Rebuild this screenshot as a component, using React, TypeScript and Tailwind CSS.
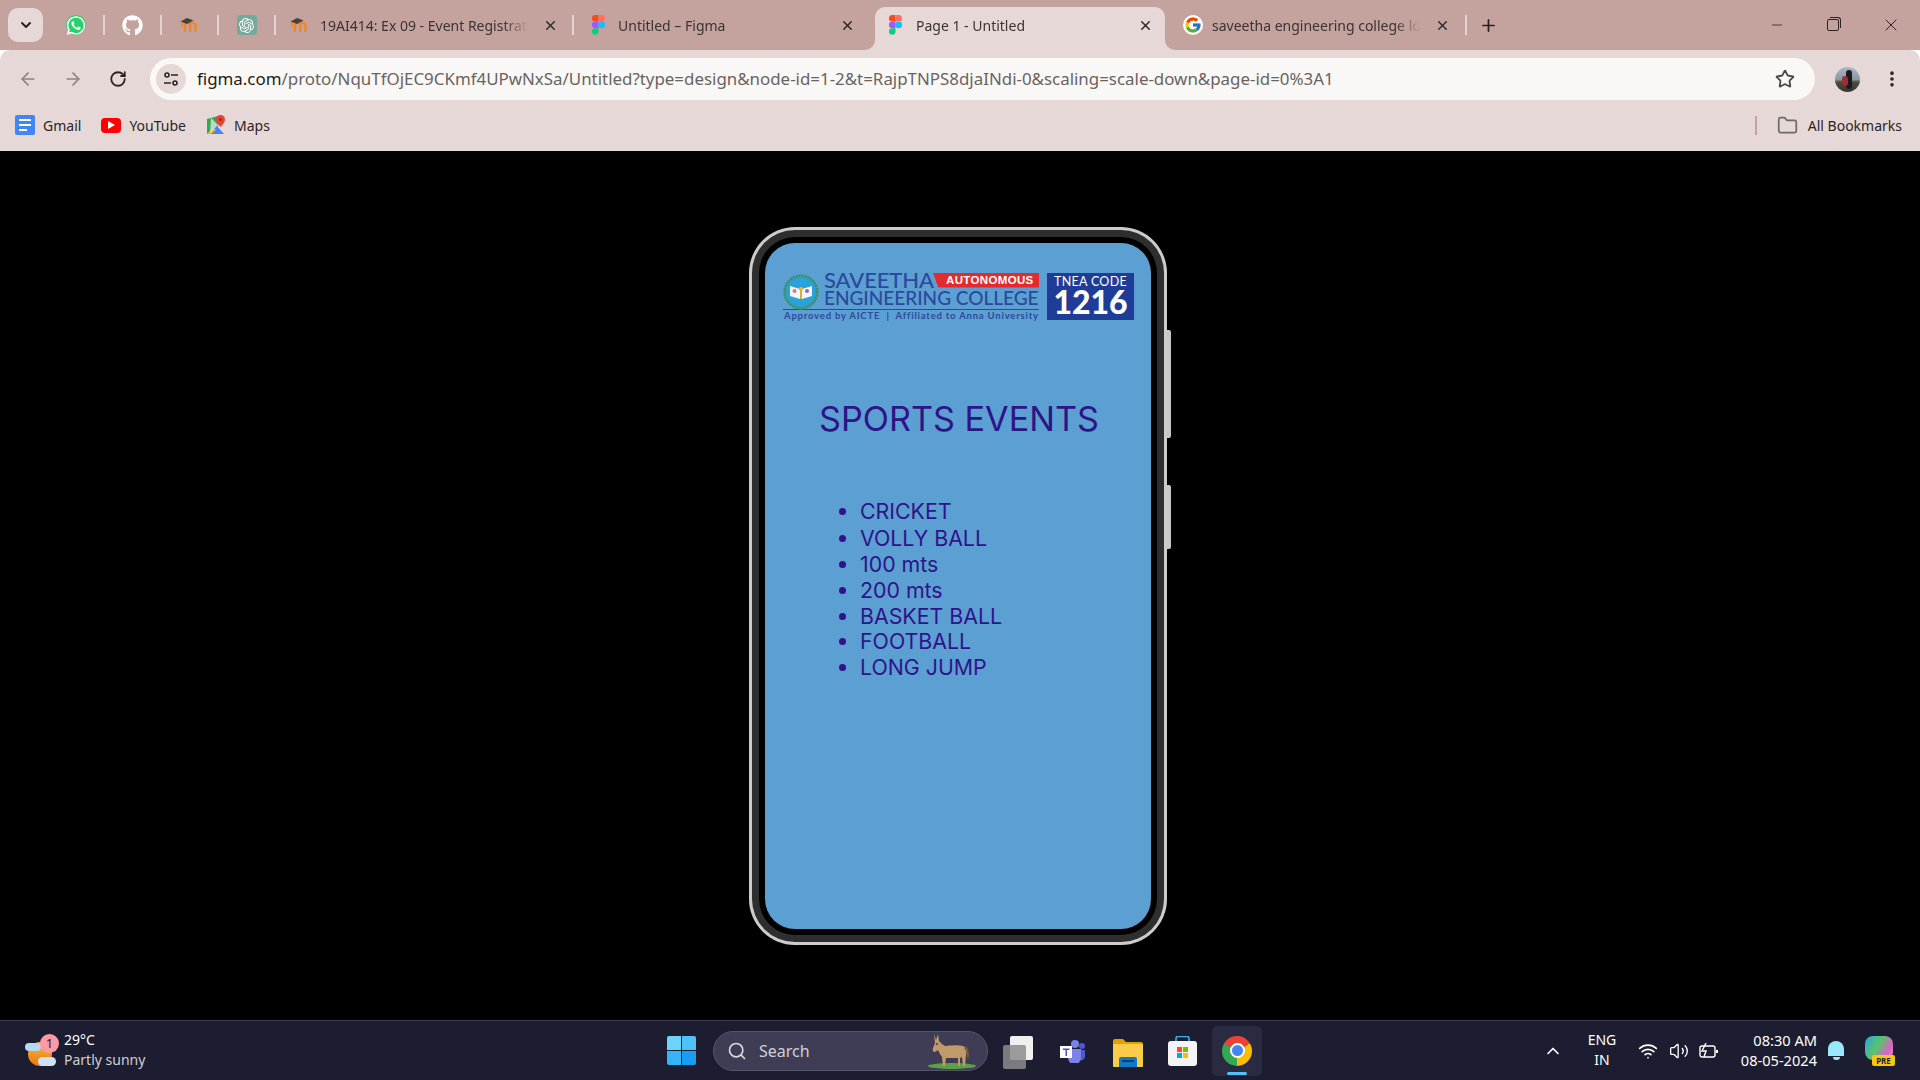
import { ArrowLeft, ArrowRight, RotateCw, X, Plus, ChevronDown, ChevronUp, Star, Folder, Minus, EllipsisVertical, Search, Wifi, Volume2 } from "lucide-react";
import { FaWhatsapp, FaGithub } from "react-icons/fa";
import { FcGoogle } from "react-icons/fc";
import { SiOpenai } from "react-icons/si";

const events = ["VOLLY BALL", "100 mts", "200 mts", "BASKET BALL", "FOOTBALL", "LONG JUMP"];

function FigmaIcon() {
  return (
    <svg width="13" height="20" viewBox="0 0 13 20" className="shrink-0">
      <path d="M3.2 0h3.3v6.6H3.2a3.3 3.3 0 0 1 0-6.6z" fill="#f24e1e" />
      <path d="M6.5 0h3.2a3.3 3.3 0 0 1 0 6.6H6.5z" fill="#ff7262" />
      <path d="M3.2 6.6h3.3v6.6H3.2a3.3 3.3 0 0 1 0-6.6z" fill="#a259ff" />
      <circle cx="9.7" cy="9.9" r="3.3" fill="#1abcfe" />
      <path d="M3.2 13.2h3.3v3.4a3.3 3.3 0 1 1-3.3-3.4z" fill="#0acf83" />
    </svg>
  );
}

function MoodleIcon() {
  return (
    <svg width="20" height="16" viewBox="0 0 20 16" className="shrink-0">
      <path d="M5 15V8.5a2.6 2.6 0 0 1 5.2 0V15M10.2 8.5a2.6 2.6 0 0 1 5.2 0V15" fill="none" stroke="#f0852d" strokeWidth="2.4" />
      <path d="M0.5 4.5 7 1l6.5 2.5L7 7z" fill="#44413f" />
      <path d="M2 5v5" stroke="#f0852d" strokeWidth="1.4" />
    </svg>
  );
}

function Divider() {
  return <div className="w-[2px] h-[20px] bg-[#e3d3d1] shrink-0" />;
}

function Pinned({ children }: { children: React.ReactNode }) {
  return <div className="w-[55px] flex items-center justify-center shrink-0">{children}</div>;
}

function Tab({ icon, title, width, active, textWidth, closeRight }: { icon: React.ReactNode; title: string; width: string; active?: boolean; textWidth: string; closeRight: string }) {
  return (
    <div className={`relative h-[43px] self-end flex items-center pb-[7px] shrink-0 ${width} ${active ? "bg-[#e6d8d7] rounded-t-[10px]" : ""}`}>
      <div className="w-[40px] flex justify-center shrink-0">{icon}</div>
      <div className={`${textWidth} overflow-hidden whitespace-nowrap text-[14px] text-[#3a3433] [mask-image:linear-gradient(to_right,black_88%,transparent)]`}>{title}</div>
      <X size={15} strokeWidth={2.4} className={`absolute top-[11px] text-[#302a2a] ${closeRight}`} />
      {active && (
        <>
          <svg width="10" height="10" viewBox="0 0 10 10" className="absolute -left-[10px] bottom-0"><path d="M10 0v10H0a10 10 0 0 0 10-10z" fill="#e6d8d7" /></svg>
          <svg width="10" height="10" viewBox="0 0 10 10" className="absolute -right-[10px] bottom-0"><path d="M0 0v10h10A10 10 0 0 1 0 0z" fill="#e6d8d7" /></svg>
        </>
      )}
    </div>
  );
}

function TabStrip() {
  return (
    <div className="h-[50px] bg-[#c4a29e] flex items-center">
      <div className="ml-[8px] w-[35px] h-[34px] rounded-[10px] bg-[#e6d8d7] flex items-center justify-center shrink-0">
        <ChevronDown size={16} strokeWidth={3} className="text-[#2b2424]" />
      </div>
      <div className="ml-[5px] w-[55px] flex items-center justify-center shrink-0">
        <div className="w-[20px] h-[20px] rounded-full bg-[#25d366] flex items-center justify-center">
          <FaWhatsapp size={21} className="text-white" />
        </div>
      </div>
      <Divider />
      <Pinned><FaGithub size={21} className="text-white" /></Pinned>
      <Divider />
      <Pinned><MoodleIcon /></Pinned>
      <Divider />
      <Pinned>
        <div className="w-[20px] h-[20px] rounded-[3px] bg-[#74aa9c] flex items-center justify-center">
          <SiOpenai size={15} className="text-white" />
        </div>
      </Pinned>
      <Divider />
      <Tab icon={<div className="ml-[7px]"><MoodleIcon /></div>} title="19AI414: Ex 09 - Event Registrat" width="w-[296px]" textWidth="w-[208px] ml-[4px]" closeRight="right-[14px]" />
      <Divider />
      <Tab icon={<div className="ml-[8px]"><FigmaIcon /></div>} title="Untitled – Figma" width="w-[301px]" textWidth="w-[200px] ml-[4px]" closeRight="right-[20px]" />
      <Tab active icon={<FigmaIcon />} title="Page 1 - Untitled" width="w-[290px]" textWidth="w-[200px] ml-[1px]" closeRight="right-[12px]" />
      <Tab
        icon={<div className="ml-[16px] w-[20px] h-[20px] rounded-full bg-white flex items-center justify-center"><FcGoogle size={18} /></div>}
        title="saveetha engineering college lo"
        width="w-[300px]"
        textWidth="w-[208px] ml-[7px]"
        closeRight="right-[15px]"
      />
      <Divider />
      <Plus size={19} strokeWidth={2.2} className="ml-[12px] text-[#2b2424]" />
      <div className="ml-auto flex items-center text-[#2b2424]">
        <Minus size={16} strokeWidth={1.2} className="w-[16px]" />
        <div className="ml-[42px] relative w-[12px] h-[12px] border border-[#2b2424] rounded-[2px]">
          <div className="absolute -top-[3px] -right-[3px] w-[11px] h-[11px] border-t border-r border-[#2b2424] rounded-tr-[3px]" />
        </div>
        <X size={20} strokeWidth={1.2} className="ml-[42px] mr-[19px]" />
      </div>
    </div>
  );
}

function Toolbar() {
  return (
    <div className="h-[50px] pt-[8px] bg-[#e6d8d7] rounded-t-[10px] flex items-center text-[#2b2424]">
      <div className="ml-[5px] w-[45px] flex justify-center"><ArrowLeft size={20} strokeWidth={2} className="text-[#8b8483]" /></div>
      <div className="w-[45px] flex justify-center"><ArrowRight size={20} strokeWidth={2} className="text-[#8b8483]" /></div>
      <div className="w-[45px] flex justify-center"><RotateCw size={18} strokeWidth={2.4} /></div>
      <div className="ml-[10px] w-[1665px] h-[42px] rounded-full bg-[#faf8f6] flex items-center">
        <div className="ml-[6px] w-[30px] h-[30px] rounded-full bg-[#e6d8d7] flex items-center justify-center">
          <svg width="16" height="16" viewBox="0 0 16 16" fill="none" stroke="#2b2424" strokeWidth="1.6">
            <circle cx="4" cy="4" r="2" />
            <path d="M8 4h7M1 12h7" />
            <circle cx="12" cy="12" r="2" />
          </svg>
        </div>
        <div className="ml-[11px] text-[16.9px] whitespace-nowrap text-[#696362]">
          <span className="text-[#1f1a1a]">figma.com</span>/proto/NquTfOjEC9CKmf4UPwNxSa/Untitled?type=design&amp;node-id=1-2&amp;t=RajpTNPS8djaINdi-0&amp;scaling=scale-down&amp;page-id=0%3A1
        </div>
        <Star size={20} strokeWidth={2.2} className="ml-auto mr-[20px] text-[#4d4847]" />
      </div>
      <div className="ml-[20px] w-[25px] h-[25px] rounded-full bg-[linear-gradient(to_bottom,#a9b8c6_0%,#8c98a0_50%,#4e4a3e_60%,#35332c_100%)] relative overflow-hidden">
        <div className="absolute left-[11px] top-[3px] w-[6px] h-[19px] rounded-full bg-[#1c1a1e]" />
        <div className="absolute left-[7px] top-[9px] w-[6px] h-[10px] rounded-full bg-[#a02c34]" />
      </div>
      <EllipsisVertical size={20} strokeWidth={2.4} className="ml-[22px]" />
    </div>
  );
}

function Bookmark({ icon, label, className }: { icon: React.ReactNode; label: string; className: string }) {
  return (
    <div className={`flex items-center ${className}`}>
      {icon}
      <span className="ml-[8px] text-[14px] text-[#2b2424]">{label}</span>
    </div>
  );
}

function BookmarksBar() {
  return (
    <div className="h-[51px] bg-[#e6d8d7] flex items-center pb-[1px]">
      <Bookmark
        className="ml-[15px]"
        label="Gmail"
        icon={
          <div className="w-[20px] h-[20px] rounded-[2px] bg-[#4285f4] flex flex-col justify-center gap-[3px] px-[4px]">
            <div className="h-[2px] bg-white" />
            <div className="h-[2px] bg-white" />
            <div className="h-[2px] w-[8px] bg-white" />
          </div>
        }
      />
      <Bookmark
        className="ml-[20px]"
        label="YouTube"
        icon={
          <div className="w-[20px] h-[15px] rounded-[4px] bg-[#f00] flex items-center justify-center">
            <svg width="7" height="8" viewBox="0 0 7 8"><path d="M0 0l7 4-7 4z" fill="#fff" /></svg>
          </div>
        }
      />
      <Bookmark
        className="ml-[20px]"
        label="Maps"
        icon={
          <svg width="20" height="20" viewBox="0 0 20 20">
            <path d="M1 4l11-3v16L1 19z" fill="#34a853" />
            <path d="M1 19l9-9 8 9z" fill="#4285f4" />
            <path d="M1 19l6-6 3 2-5 4z" fill="#fbbc05" />
            <path d="M5 3l7 7-8 8z" fill="#e8eaed" opacity="0.75" />
            <path d="M14.5 0a4.5 4.5 0 0 1 4.5 4.5C19 8 14.5 12 14.5 12S10 8 10 4.5A4.5 4.5 0 0 1 14.5 0z" fill="#ea4335" />
            <circle cx="14.5" cy="4.5" r="1.6" fill="#a52714" />
          </svg>
        }
      />
      <div className="ml-auto w-[2px] h-[19px] bg-[#c4a29e]" />
      <Folder size={21} strokeWidth={2} className="ml-[20px] text-[#6f6a69]" />
      <span className="ml-[10px] mr-[18px] text-[14px] text-[#2b2424]">All Bookmarks</span>
    </div>
  );
}

function Emblem() {
  return (
    <svg width="36" height="36" viewBox="0 0 36 36" className="shrink-0">
      <circle cx="18" cy="18" r="17.500" fill="#3a9ab0" />
      <circle cx="18" cy="18" r="16.500" fill="none" stroke="#3f8f4e" strokeWidth="2" strokeDasharray="1.5 1.5" />
      <circle cx="18" cy="18" r="14" fill="#29a3dc" />
      <path d="M7 12l10 3v10L7 22zM29 12l-10 3v10l10-3z" fill="#f4f6fa" />
      <circle cx="18" cy="15" r="2" fill="#f0b429" />
      <path d="M17.2 16h1.600v9h-1.600z" fill="#f0b429" />
      <circle cx="24" cy="17" r="2" fill="#8a6ab8" />
      <circle cx="11.500" cy="17" r="2" fill="#d27a8a" />
    </svg>
  );
}

function CollegeLogo() {
  return (
    <div className="flex ml-[18px] mt-[30px]">
      <div className="w-[256px] text-[#2a4a9c]">
        <div className="flex h-[33px]">
          <div className="mt-[1px]"><Emblem /></div>
          <div className="ml-[5px] flex-1 min-w-0 font-['Lato',sans-serif] font-medium">
            <div className="flex h-[15px]">
              <span className="w-[109px] -mt-[2px] text-[22px] leading-[17px] tracking-[-0.1px] whitespace-nowrap overflow-visible">SAVEETHA</span>
              <div className="w-[106px] h-[15px] bg-[#e32b2b] text-white font-['Liberation_Sans',sans-serif] font-bold text-[11.5px] leading-[15px] tracking-[0.35px] pl-[13px] whitespace-nowrap [clip-path:polygon(0_0,100%_0,100%_100%,5%_100%)]">
                AUTONOMOUS
              </div>
            </div>
            <div className="mt-[2px] text-[19px] leading-[16px] tracking-[0px] whitespace-nowrap">ENGINEERING COLLEGE</div>
          </div>
        </div>
        <div className="mt-[3px] h-[1px] bg-[#2a4a9c]" />
        <div className="text-[9.5px] leading-[11px] tracking-[0.8px] whitespace-nowrap font-['Lato',sans-serif] font-bold pl-[1px]">
          Approved by AICTE&nbsp; | &nbsp;Affiliated to Anna University
        </div>
      </div>
      <div className="ml-[8px] w-[87px] h-[47px] bg-[#1f3c98] text-white flex flex-col items-center font-['Lato',sans-serif]">
        <div className="mt-[2px] text-[12.5px] leading-[14px] tracking-[0.3px] whitespace-nowrap">TNEA CODE</div>
        <div className="text-[32px] leading-[25px] font-black whitespace-nowrap">1216</div>
      </div>
    </div>
  );
}

function Phone() {
  return (
    <div className="relative w-[418px] h-[718px] rounded-[46px] bg-[#cccccc] p-[3px]">
      <div className="absolute -right-[4px] top-[103px] w-[4px] h-[108px] rounded-r-[2px] bg-[#c8c8c8]" />
      <div className="absolute -right-[4px] top-[258px] w-[4px] h-[64px] rounded-r-[2px] bg-[#c8c8c8]" />
      <div className="h-full rounded-[43px] bg-[#2e2e2e] p-[7px]">
        <div className="h-full rounded-[36px] bg-black p-[6px]">
          <div className="h-full rounded-[30px] bg-[#5c9fd2] flex flex-col font-['Inter',sans-serif] text-[#2e1489]">
            <CollegeLogo />
            <h1 className="mt-[77px] pl-[2px] text-center text-[34.2px] leading-[42px] font-normal whitespace-nowrap">SPORTS EVENTS</h1>
            <ul className="mt-[59px] ml-[95px] list-disc text-[21.33px] leading-[25.8px]">
              <li className="mb-[2px]">CRICKET</li>
              {events.map((name) => (
                <li key={name}>{name}</li>
              ))}
            </ul>
          </div>
        </div>
      </div>
    </div>
  );
}

function WeatherIcon() {
  return (
    <div className="relative w-[34px] h-[34px] shrink-0">
      <div className="absolute left-[3px] top-[8px] w-[24px] h-[24px] rounded-full bg-[linear-gradient(to_bottom,#f7b733,#e8781a)]" />
      <div className="absolute left-0 top-[9px] w-[16px] h-[8px] rounded-full bg-[#b9d6f2]" />
      <div className="absolute left-[13px] top-[23px] w-[18px] h-[9px] rounded-full bg-[#cfe3f6]" />
      <div className="absolute left-[15px] top-0 w-[19px] h-[19px] rounded-full bg-[#ff99a4] text-[#2b1d25] text-[13px] leading-[19px] text-center">1</div>
    </div>
  );
}

function Donkey() {
  return (
    <svg width="50" height="40" viewBox="0 0 50 40">
      <ellipse cx="25" cy="35" rx="24" ry="3" fill="#5ea04a" />
      <path d="M7 3l2 6 2-6 1 7c2 2 4 4 6 5 6-1 14-1 18 0 3 1 4 5 3 9l-1 11h-2l-1-9-2 1v8h-2v-8H19l-1 8h-2l-1-9c-2-3-3-5-4-7l-3 2c-2 0-3-2-2-4l2-5z" fill="#c09a68" />
      <path d="M38 15c3 1 4 5 4 10l-1 3-1-3c0-3-1-6-3-8z" fill="#7a5a38" />
      <circle cx="10" cy="13" r="1" fill="#3b3a66" />
    </svg>
  );
}

function TeamsIcon() {
  return (
    <svg width="26" height="24" viewBox="0 0 26 24">
      <circle cx="15" cy="5" r="4" fill="#7b83eb" />
      <circle cx="22" cy="7" r="3" fill="#5059c9" />
      <path d="M18 11h7v7a4 4 0 0 1-7 2z" fill="#5059c9" />
      <path d="M8 10h13v9a5 5 0 0 1-13 0z" fill="#7b83eb" />
      <rect x="0" y="7" width="12" height="12" fill="#fff" />
      <path d="M3 9.5h6.5V11H7v6H5.500v-6H3z" fill="#4b53bc" />
    </svg>
  );
}

function ExplorerIcon() {
  return (
    <svg width="30" height="28" viewBox="0 0 30 28">
      <path d="M0 2a2 2 0 0 1 2-2h8l3 3h15a2 2 0 0 1 2 2v4H0z" fill="#e0a000" />
      <rect x="0" y="5" width="30" height="23" rx="1" fill="#fbcb4a" />
      <path d="M6 28v-8a2 2 0 0 1 2-2h14a2 2 0 0 1 2 2v8z" fill="#1478c8" />
      <rect x="9" y="21" width="12" height="2" fill="#0a3f78" />
    </svg>
  );
}

function StoreIcon() {
  return (
    <svg width="29" height="30" viewBox="0 0 29 30">
      <path d="M8 6V2.500a2 2 0 0 1 2-2h9a2 2 0 0 1 2 2V6" fill="none" stroke="#3db4f0" strokeWidth="1.6" />
      <rect x="0" y="5" width="29" height="25" rx="3" fill="#f4f4f4" />
      <rect x="9" y="11" width="5" height="5" fill="#f25022" />
      <rect x="15" y="11" width="5" height="5" fill="#7fba00" />
      <rect x="9" y="17" width="5" height="5" fill="#00a4ef" />
      <rect x="15" y="17" width="5" height="5" fill="#ffb900" />
    </svg>
  );
}

function Taskbar() {
  return (
    <div className="h-[60px] bg-[#1c1d30] border-t border-[#3c3c4e] flex items-center text-white">
      <div className="w-[667px] flex items-center pl-[25px] shrink-0">
        <WeatherIcon />
        <div className="ml-[5px] -mt-[2px] text-[14px] leading-[20px]">
          <div>29°C</div>
          <div className="text-[#cfcfd4]">Partly sunny</div>
        </div>
      </div>
      <div className="w-[29px] h-[29px] grid grid-cols-2 gap-[1px] shrink-0">
        <div className="rounded-tl-[2px] bg-[#6ad4fb]" />
        <div className="rounded-tr-[2px] bg-[#4ec1f9]" />
        <div className="rounded-bl-[2px] bg-[#35b5f8]" />
        <div className="rounded-br-[2px] bg-[#1a9cf5]" />
      </div>
      <div className="ml-[17px] w-[275px] h-[40px] rounded-full bg-[#3e3d55] border border-[#55556a] flex items-center shrink-0">
        <Search size={20} strokeWidth={2} className="ml-[13px] text-[#d8d8de]" />
        <span className="ml-[12px] text-[16px] text-[#d0d0d6]">Search</span>
        <div className="ml-auto mr-[10px]"><Donkey /></div>
      </div>
      <div className="ml-[15px] relative w-[30px] h-[30px] shrink-0">
        <div className="absolute left-[7px] top-0 w-[23px] h-[24px] rounded-[2px] bg-[#f0f0f0]" />
        <div className="absolute left-0 top-[9px] w-[23px] h-[24px] rounded-[2px] bg-[#8c8c8c]/85" />
      </div>
      <div className="ml-[27px] w-[26px] flex justify-center shrink-0"><TeamsIcon /></div>
      <div className="ml-[27px] shrink-0 w-[30px] mt-[4px]"><ExplorerIcon /></div>
      <div className="ml-[25px] shrink-0 w-[29px]"><StoreIcon /></div>
      <div className="ml-[15px] relative w-[50px] h-[50px] rounded-[5px] bg-[#2a2b40] flex items-center justify-center shrink-0">
        <div className="w-[30px] h-[30px] rounded-full bg-[conic-gradient(from_-60deg,#ea4335_0deg_120deg,#fbbc05_120deg_240deg,#34a853_240deg_360deg)] flex items-center justify-center">
          <div className="w-[11px] h-[11px] rounded-full bg-[#4285f4] border-[2px] border-white box-content" />
        </div>
        <div className="absolute left-[15px] bottom-[1px] w-[20px] h-[3px] rounded-full bg-[#4fc3f7]" />
      </div>
      <ChevronUp size={20} strokeWidth={2} className="ml-[281px] shrink-0" />
      <div className="ml-[14px] w-[50px] text-center text-[14px] leading-[20px] -mt-[2px] shrink-0">
        <div>ENG</div>
        <div>IN</div>
      </div>
      <Wifi size={20} strokeWidth={2} className="ml-[11px] shrink-0" />
      <Volume2 size={20} strokeWidth={1.6} className="ml-[11px] shrink-0" />
      <svg width="20" height="16" viewBox="0 0 20 16" className="ml-[10px] shrink-0" fill="none" stroke="#fff" strokeWidth="1.4">
        <rect x="1" y="3" width="15" height="11" rx="2" />
        <path d="M18 7v3" strokeWidth="2" />
        <path d="M7 0L3 8h4l-2 6" />
      </svg>
      <div className="ml-auto mr-[11px] -mt-[2px] text-right text-[14.6px] leading-[20px] whitespace-nowrap">
        <div>08:30 AM</div>
        <div>08-05-2024</div>
      </div>
      <div className="relative w-[16px] h-[20px] mr-[21px] shrink-0">
        <div className="w-[16px] h-[15px] rounded-t-full bg-[#9be7fb]" />
        <div className="mx-auto w-[7px] h-[3px] rounded-b-full bg-[#9be7fb] mt-[1px]" />
      </div>
      <div className="relative w-[30px] h-[30px] mr-[25px] shrink-0">
        <div className="w-[28px] h-[24px] rounded-[8px] bg-[linear-gradient(120deg,#2aa7e0,#58c46a_45%,#d764c8_75%,#f08ab0)]" />
        <div className="absolute left-[7px] bottom-0 w-[23px] h-[11px] rounded-[2px] bg-[#f5c518] text-[#1c1d30] text-[8px] leading-[11px] font-bold text-center">PRE</div>
      </div>
    </div>
  );
}

export default function App() {
  return (
    <div className="w-[1920px] h-[1080px] flex flex-col overflow-hidden font-['Noto_Sans',sans-serif]">
      <TabStrip />
      <Toolbar />
      <BookmarksBar />
      <main className="h-[869px] bg-black flex items-center justify-center pr-[4px]">
        <Phone />
      </main>
      <Taskbar />
    </div>
  );
}
